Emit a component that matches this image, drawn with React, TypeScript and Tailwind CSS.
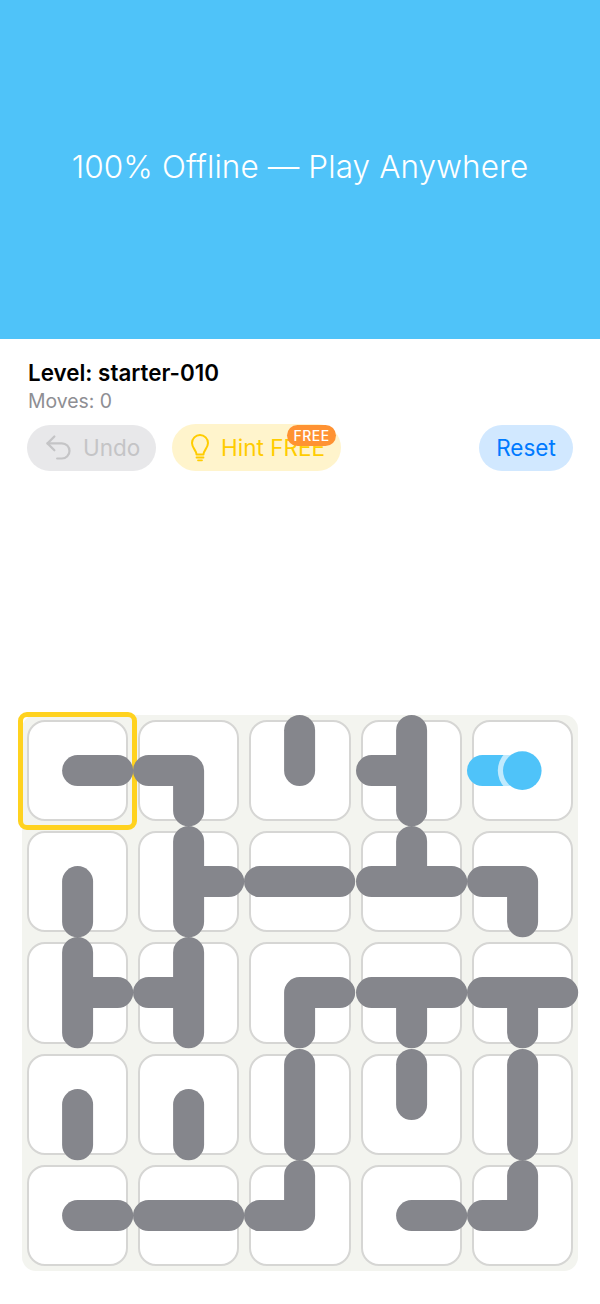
import React from "react";

type Dir = "U" | "D" | "L" | "R";
const rows: string[][] = [
  ["R", "LD", "U", "UDL", "L"],
  ["D", "UDR", "LR", "ULR", "LD"],
  ["UDR", "UDL", "RD", "LRD", "LRD"],
  ["D", "D", "UD", "U", "UD"],
  ["R", "LR", "LU", "R", "LU"],
];

const END: Record<Dir, [number, number]> = {
  U: [50.6, 10.5],
  D: [50.6, 90.7],
  L: [10.5, 50.6],
  R: [90.7, 50.6],
};

function Pipes({ dirs, color }: { dirs: string; color: string }) {
  const list = dirs.split("") as Dir[];
  const d = list.map((k) => `M50.6 50.6L${END[k][0]} ${END[k][1]}`).join("");
  return (
    <svg viewBox="0 0 101.2 101.2" className="absolute inset-0 w-full h-full overflow-visible">
      <path d={d} fill="none" stroke={color} strokeWidth="31" strokeLinecap="round" strokeLinejoin="round" />
    </svg>
  );
}

function Cell({ dirs, source }: { dirs: string; source?: boolean }) {
  return (
    <div className="relative h-[101.2px] rounded-[18px] border-2 border-[#d6d6d4] bg-white">
      <div className="absolute -inset-[2px] z-10">
        <Pipes dirs={dirs} color={source ? "#4fc3f9" : "#85868c"} />
        {source && (
          <svg viewBox="0 0 101.2 101.2" className="absolute inset-0 w-full h-full overflow-visible">
            <circle cx="50.3" cy="50.6" r="24.5" fill="#ffffff" fillOpacity="0.65" />
            <circle cx="50.3" cy="50.6" r="19.3" fill="#4fc3f9" />
          </svg>
        )}
      </div>
    </div>
  );
}

function UndoIcon() {
  return (
    <svg width="33" height="33" viewBox="0 0 24 24" fill="none" stroke="currentColor" strokeWidth="1.6" strokeLinecap="round" strokeLinejoin="round" className="shrink-0">
      <path d="M9 14L4 9l5-5" />
      <path d="M4 9h10.5a5.5 5.5 0 0 1 0 11H11" />
    </svg>
  );
}

function BulbIcon() {
  return (
    <svg width="18" height="28" viewBox="0 0 18 28" fill="none" stroke="currentColor" strokeWidth="2" strokeLinecap="round" strokeLinejoin="round" className="shrink-0">
      <path d="M5.5 20.5C5.5 16.5 1 14 1 9a8 8 0 0 1 16 0c0 5-4.5 7.5-4.5 11.5Z" />
      <path d="M5.5 23.5H12.5" strokeWidth="1.8" />
      <path d="M7 26.3H11" strokeWidth="1.8" />
    </svg>
  );
}

export default function App() {
  return (
    <div className="w-[600px] h-[1304px] bg-white overflow-hidden font-['Inter',sans-serif]">
      <div className="h-[339px] bg-[#4fc3f9] flex items-center justify-center">
        <span className="text-white text-[31.5px] font-light tracking-[0.1px] -mt-[5px]">100% Offline — Play Anywhere</span>
      </div>

      <div className="px-[27px] h-[376px]">
        <div className="pl-[1px] pt-[20px] text-black text-[22.4px] leading-[28px] font-semibold">Level: starter-010</div>
        <div className="pl-[1px] pt-[2px] text-[#8e8e93] text-[19.4px] leading-[24px]">Moves: 0</div>
        <div className="flex items-center mt-[11px]">
          <div className="h-[46px] w-[129px] pl-[14.5px] rounded-full bg-[#e8e8ea] flex items-center gap-[8.5px] text-[#c4c4c6] text-[22.5px]">
            <UndoIcon />
            <span>Undo</span>
          </div>
          <div className="relative ml-[16px] h-[47px] w-[169px] pl-[19px] rounded-full bg-[#fff4cc] flex items-center gap-[12px] text-[#ffcc00] text-[22.5px]">
            <BulbIcon />
            <span>Hint FREE</span>
            <span className="absolute right-[5px] top-[1px] h-[21px] w-[49px] rounded-full bg-[#ff9232] text-white text-[14px] font-medium tracking-[0.5px] flex items-center justify-center">FREE</span>
          </div>
          <div className="ml-auto h-[46px] w-[94px] rounded-full bg-[#d1e8ff] flex items-center justify-center text-[#007aff] text-[22.5px]">Reset</div>
        </div>
      </div>

      <div className="relative ml-[22px] w-[556px] rounded-[14px] bg-[#f3f4ef] p-[5px] grid grid-cols-5 gap-[10px]">
        {rows.flatMap((r, i) =>
          r.map((dirs, j) => <Cell key={`${i}-${j}`} dirs={dirs} source={i === 0 && j === 4} />)
        )}
        <div className="absolute left-[-4px] top-[-3px] z-[5] w-[119px] h-[118px] rounded-[9px] border-[5px] border-[#ffd21f]" />
      </div>
    </div>
  );
}
